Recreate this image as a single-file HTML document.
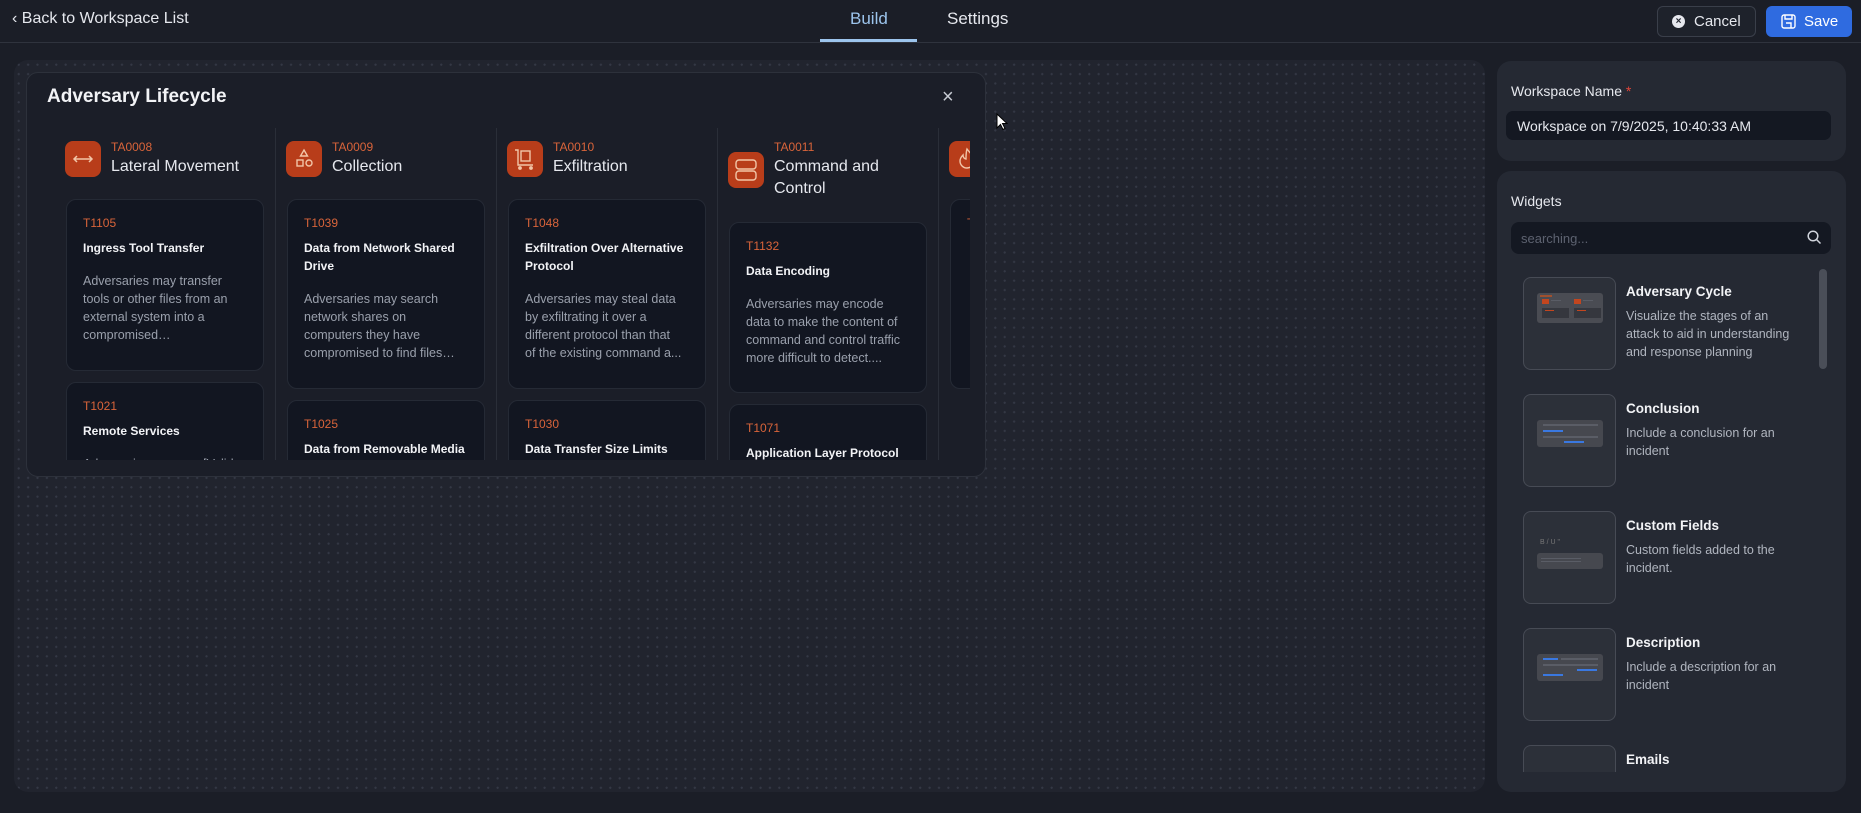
<!DOCTYPE html>
<html><head><meta charset="utf-8"><style>
*{box-sizing:border-box;margin:0;padding:0}
body{width:1861px;height:813px;overflow:hidden;background:#1b1e27;font-family:"Liberation Sans",sans-serif;color:#e6e8ee;position:relative}
.a{position:absolute}
.hdr{left:0;top:0;width:1861px;height:43px;border-bottom:1px solid #2f333d;background:#1b1e27}
.canvas{left:14px;top:60px;width:1471px;height:732px;border-radius:14px;background-color:#21242e;background-image:radial-gradient(circle,#343845 1px,transparent 1.2px);background-size:9.4px 9.4px}
.lc{left:26px;top:72px;width:960px;height:405px;border:1px solid #2d313b;border-radius:12px;background:#1b1e28}
.col{top:0;width:221px;height:332px;border-right:1px solid #2a2e38;overflow:hidden}
.ic{position:absolute;left:10px;top:13px;width:36px;height:36px;border-radius:8px;background:#b83d1a}
.ta{position:absolute;left:56px;top:12px;font-size:12px;color:#d9643a}
.nm{position:absolute;left:56px;top:28px;font-size:16px;line-height:22px;color:#e6e8ee;width:160px}
.cd{position:absolute;left:11px;width:198px;background:#121621;border:1px solid #252a35;border-radius:10px;padding:16px 22px 16px 16px}
.cd .t{font-size:12px;color:#d9643a;margin-bottom:9px}
.cd .h{font-size:12px;font-weight:bold;line-height:18px;color:#f2f3f6;margin-right:-10px}
.cd .d{font-size:12.5px;line-height:18px;color:#9aa0ac;margin-top:15px;display:-webkit-box;-webkit-line-clamp:4;-webkit-box-orient:vertical;overflow:hidden}
.pn{background:#252933;border-radius:14px}
.wi{position:absolute;left:26px;width:93px;height:93px;border:1px solid #474b55;border-radius:8px;background:#2c3039}
.wt{position:absolute;left:129px;font-size:13.5px;font-weight:bold;color:#f2f3f6}
.wd{position:absolute;left:129px;font-size:12.5px;line-height:18px;color:#b0b5bf;width:170px}
.th{position:absolute;left:13px;width:66px;background:#46484f;border-radius:3px}
.ln{position:absolute;height:2px;background:#5a5d66}
</style></head><body>
<div class="a hdr"></div>
<div class="a" style="left:12px;top:10px;font-size:16px;color:#e6e8ee">&#8249; Back to Workspace List</div>
<div class="a" style="left:850px;top:9px;font-size:17px;color:#9cc4ec">Build</div>
<div class="a" style="left:820px;top:39px;width:97px;height:3px;background:#9cc4ec"></div>
<div class="a" style="left:947px;top:9px;font-size:17px;color:#e6e8ee">Settings</div>
<div class="a" style="left:1657px;top:6px;width:99px;height:31px;border:1px solid #3a3f4a;border-radius:6px;background:#1e222b"></div>
<div class="a" style="left:1672px;top:15px;width:13px;height:13px;border-radius:50%;background:#e6e8ee;color:#1e222b;font-size:10px;line-height:13px;text-align:center;font-weight:bold">×</div>
<div class="a" style="left:1694px;top:13px;font-size:15px;color:#e6e8ee">Cancel</div>
<div class="a" style="left:1766px;top:6px;width:86px;height:31px;border-radius:6px;background:#2f6be0"></div>
<svg class="a" style="left:1781px;top:14px" width="15" height="15" viewBox="0 0 15 15" fill="none" stroke="#fff" stroke-width="1.4"><rect x="1" y="1" width="13" height="13" rx="2"/><path d="M4 1v4h7V1M5 9h5v5"/></svg>
<div class="a" style="left:1804px;top:13px;font-size:15px;color:#fff">Save</div>

<div class="a canvas"></div>
<div class="a lc"></div>
<div class="a" style="left:47px;top:86px;font-size:19px;font-weight:bold;color:#f2f3f6">Adversary Lifecycle</div>
<div class="a" style="left:942px;top:86px;font-size:20px;color:#c8ccd4">×</div>
<svg class="a" style="left:996px;top:113px" width="12" height="18"><path d="M1 1v14l3.5-3.5 2.5 5 2-1-2.5-5H11z" fill="#fff" stroke="#000"/></svg>

<div class="a" style="left:42px;top:128px;width:928px;height:332px;overflow:hidden">
 <div class="a col" style="left:13px">
  <div class="ic"><svg width="36" height="36" fill="none" stroke="#f2c6a8" stroke-width="1.5"><path d="M9 18h18M12 15l-3 3 3 3M24 15l3 3-3 3"/></svg></div>
  <div class="ta">TA0008</div><div class="nm">Lateral Movement</div>
  <div class="cd" style="top:71px;height:172px"><div class="t">T1105</div><div class="h">Ingress Tool Transfer</div><div class="d">Adversaries may transfer tools or other files from an external system into a compromised environment....</div></div>
  <div class="cd" style="top:254px;height:120px"><div class="t">T1021</div><div class="h">Remote Services</div><div class="d">Adversaries may use [Valid</div></div>
 </div>
 <div class="a col" style="left:234px">
  <div class="ic"><svg width="36" height="36" fill="none" stroke="#f2c6a8" stroke-width="1.4"><path d="M18 9l3.5 6h-7z"/><rect x="11" y="19" width="6" height="6"/><circle cx="23" cy="22" r="3"/></svg></div>
  <div class="ta">TA0009</div><div class="nm">Collection</div>
  <div class="cd" style="top:71px;height:190px"><div class="t">T1039</div><div class="h">Data from Network Shared Drive</div><div class="d">Adversaries may search network shares on computers they have compromised to find files o...</div></div>
  <div class="cd" style="top:272px;height:120px"><div class="t">T1025</div><div class="h">Data from Removable Media</div></div>
 </div>
 <div class="a col" style="left:455px">
  <div class="ic"><svg width="36" height="36" fill="none" stroke="#f2c6a8" stroke-width="1.4"><path d="M8 9h3v15h15"/><rect x="14" y="10" width="9" height="10"/><circle cx="13" cy="27" r="1.2" fill="#f2c6a8"/><circle cx="24" cy="27" r="1.2" fill="#f2c6a8"/></svg></div>
  <div class="ta">TA0010</div><div class="nm">Exfiltration</div>
  <div class="cd" style="top:71px;height:190px;padding-right:12px"><div class="t">T1048</div><div class="h">Exfiltration Over Alternative Protocol</div><div class="d" style="padding-right:10px">Adversaries may steal data by exfiltrating it over a different protocol than that of the existing command a...</div></div>
  <div class="cd" style="top:272px;height:120px"><div class="t">T1030</div><div class="h">Data Transfer Size Limits</div></div>
 </div>
 <div class="a col" style="left:676px">
  <div class="ic" style="top:24px"><svg width="36" height="36" fill="none" stroke="#f2c6a8" stroke-width="1.4"><rect x="8" y="8" width="20" height="9" rx="3"/><rect x="8" y="19" width="20" height="9" rx="3"/></svg></div>
  <div class="ta">TA0011</div><div class="nm">Command and Control</div>
  <div class="cd" style="top:94px;height:171px"><div class="t">T1132</div><div class="h">Data Encoding</div><div class="d">Adversaries may encode data to make the content of command and control traffic more difficult to detect....</div></div>
  <div class="cd" style="top:276px;height:120px"><div class="t">T1071</div><div class="h">Application Layer Protocol</div></div>
 </div>
 <div class="a col" style="left:897px;border:none">
  <div class="ic"><svg width="36" height="36" fill="none" stroke="#f2c6a8" stroke-width="1.4"><path d="M18 8c3 4 7 7 7 12a7 7 0 0 1-14 0c0-3 2-5 3-6 0 3 2 4 3 4 0-4 0-7 1-10z"/></svg></div>
  <div class="cd" style="top:71px;height:190px"><div class="t">T</div></div>
 </div>
</div>

<div class="a pn" style="left:1497px;top:61px;width:349px;height:100px"></div>
<div class="a" style="left:1511px;top:83px;font-size:14px;color:#e6e8ee">Workspace Name <span style="color:#e0453a">*</span></div>
<div class="a" style="left:1506px;top:111px;width:325px;height:29px;border-radius:7px;background:#141822"></div>
<div class="a" style="left:1517px;top:118px;font-size:14px;color:#e6e8ee">Workspace on 7/9/2025, 10:40:33 AM</div>

<div class="a pn" style="left:1497px;top:171px;width:349px;height:621px;overflow:hidden">
 <div class="a" style="left:14px;top:22px;font-size:14px;color:#e6e8ee">Widgets</div>
 <div class="a" style="left:14px;top:51px;width:320px;height:32px;border-radius:8px;background:#141822"></div>
 <div class="a" style="left:24px;top:60px;font-size:13px;color:#5d6270">searching...</div>
 <svg class="a" style="left:310px;top:59px" width="15" height="15" fill="none" stroke="#d0d4dc" stroke-width="1.5"><circle cx="6" cy="6" r="4.8"/><path d="M9.5 9.5l4 4"/></svg>
 <div class="a" style="left:322px;top:98px;width:8px;height:100px;border-radius:4px;background:#4a4e58"></div>
 <div class="a" style="left:0;top:100px;width:349px;height:501px;overflow:hidden">
  <div class="wi" style="top:6px"><div class="th" style="top:15px;height:30px;background:#4a4c53;overflow:hidden"><div class="a" style="left:3px;top:2px;width:12px;height:2px;background:#a0502e"></div><div class="a" style="left:5px;top:6px;width:7px;height:5px;background:#c2461f"></div><div class="ln" style="left:14px;top:7px;width:10px;height:1px"></div><div class="a" style="left:37px;top:6px;width:7px;height:5px;background:#c2461f"></div><div class="ln" style="left:46px;top:7px;width:10px;height:1px"></div><div class="a" style="left:5px;top:15px;width:27px;height:10px;background:#35373e"></div><div class="a" style="left:37px;top:15px;width:27px;height:10px;background:#35373e"></div><div class="a" style="left:8px;top:17px;width:9px;height:1px;background:#c2461f"></div><div class="a" style="left:40px;top:17px;width:9px;height:1px;background:#c2461f"></div></div></div>
  <div class="wt" style="top:13px">Adversary Cycle</div>
  <div class="wd" style="top:36px">Visualize the stages of an attack to aid in understanding and response planning</div>
  <div class="wi" style="top:123px"><div class="th" style="top:25px;height:27px"><div class="ln" style="left:6px;top:4px;width:55px"></div><div class="a" style="left:6px;top:10px;width:20px;height:2px;background:#3a78e0"></div><div class="ln" style="left:6px;top:16px;width:55px"></div><div class="a" style="left:27px;top:21px;width:20px;height:2px;background:#3a78e0"></div></div></div>
  <div class="wt" style="top:130px">Conclusion</div>
  <div class="wd" style="top:153px">Include a conclusion for an incident</div>
  <div class="wi" style="top:240px"><div class="a" style="left:16px;top:27px;font-size:7px;color:#777">B / U "</div><div class="th" style="top:41px;height:16px"><div class="ln" style="left:4px;top:5px;width:40px;height:1px"></div><div class="ln" style="left:4px;top:8px;width:40px;height:1px"></div></div></div>
  <div class="wt" style="top:247px">Custom Fields</div>
  <div class="wd" style="top:270px">Custom fields added to the incident.</div>
  <div class="wi" style="top:357px"><div class="th" style="top:25px;height:27px"><div class="a" style="left:6px;top:4px;width:15px;height:2px;background:#3a78e0"></div><div class="ln" style="left:24px;top:4px;width:37px"></div><div class="ln" style="left:6px;top:10px;width:55px"></div><div class="a" style="left:40px;top:15px;width:20px;height:2px;background:#3a78e0"></div><div class="a" style="left:6px;top:20px;width:20px;height:2px;background:#3a78e0"></div></div></div>
  <div class="wt" style="top:364px">Description</div>
  <div class="wd" style="top:387px">Include a description for an incident</div>
  <div class="wi" style="top:474px"></div>
  <div class="wt" style="top:481px">Emails</div>
 </div>
</div>
</body></html>
